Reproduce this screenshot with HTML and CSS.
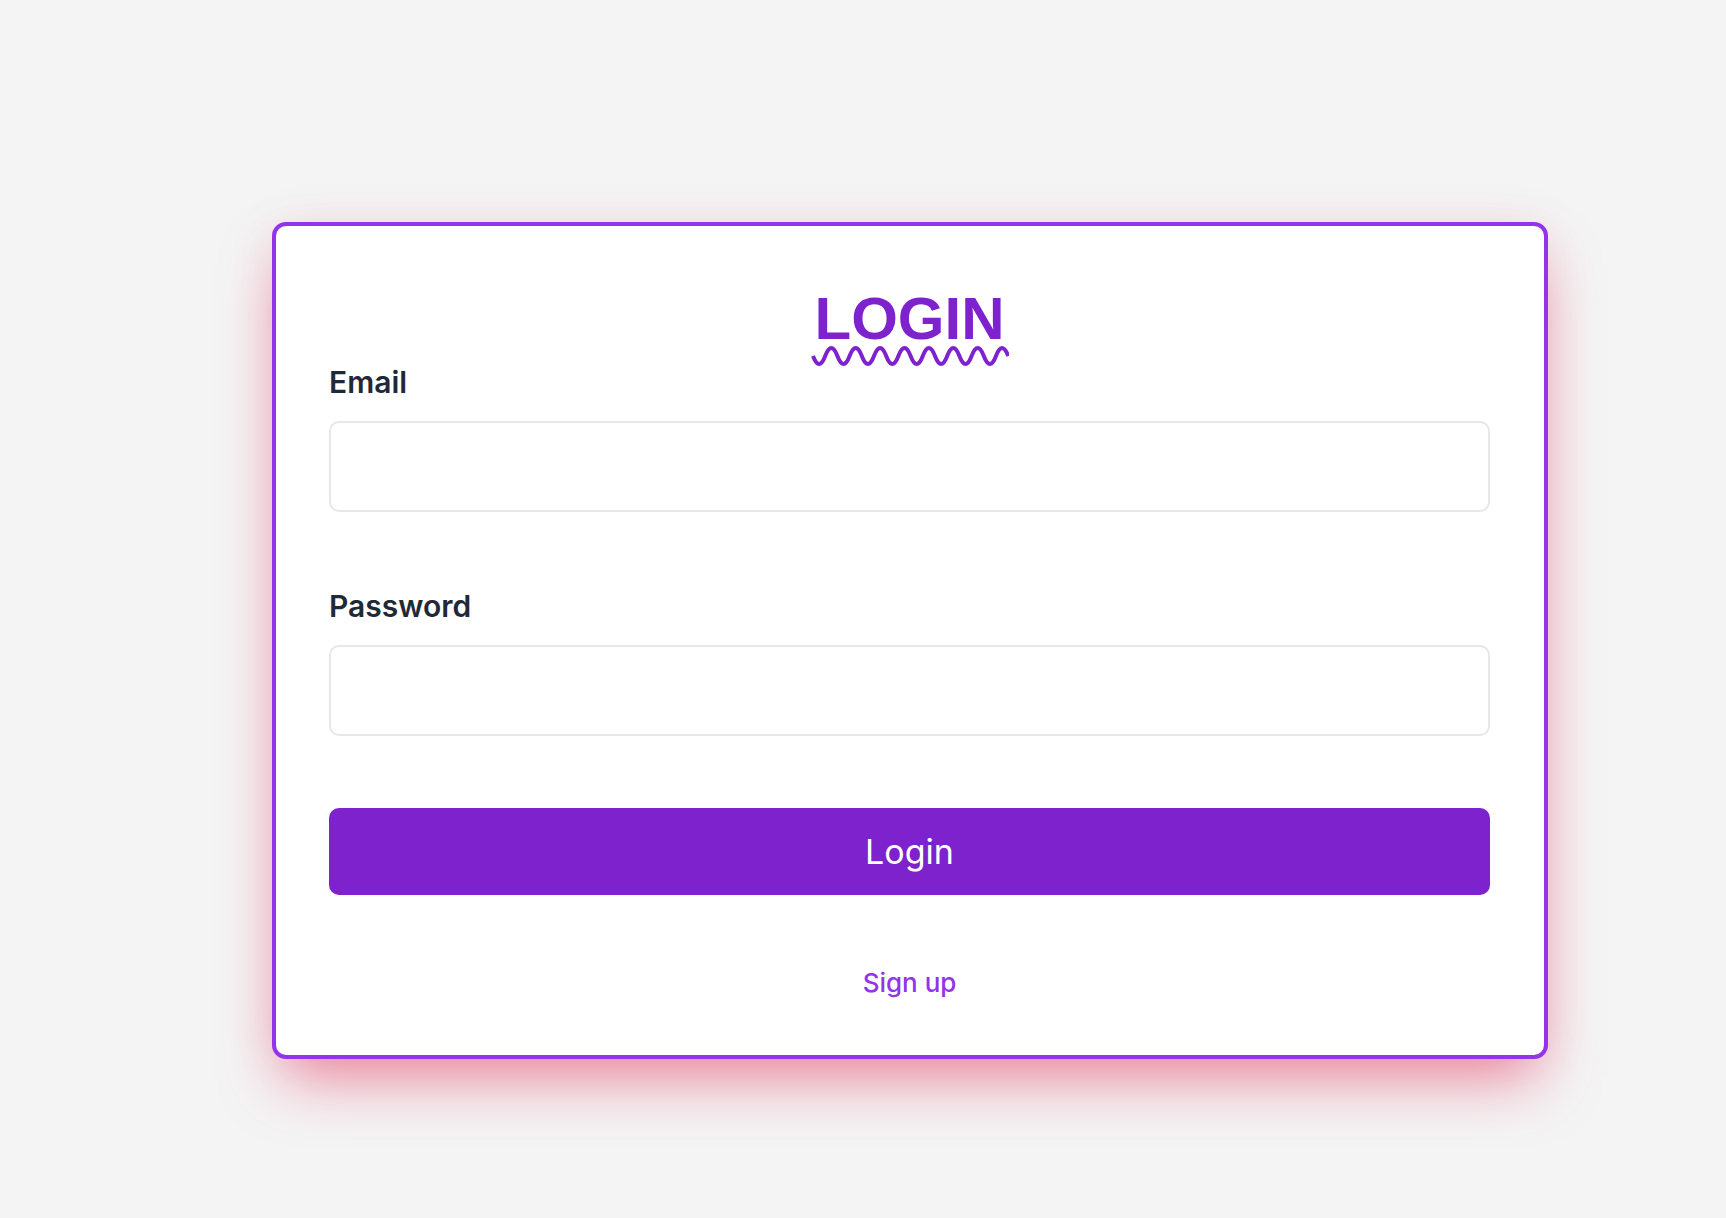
FILE: index.html
```html
<!DOCTYPE html>
<html lang="en">
<head>
    <meta charset="UTF-8">
    <meta name="viewport" content="width=device-width, initial-scale=1.0">
    <title>Login</title>
    <link rel="stylesheet" href="styles.css">
</head>
<body>
    <div class="login-card">
        <h1 class="login-title">
            <span class="title-text">LOGIN</span>
            <svg class="title-wave" width="198" height="20" viewBox="0 0 198 20">
                <path d="M2 6 q6.1 16 12.2 0 t12.2 0 t12.2 0 t12.2 0 t12.2 0 t12.2 0 t12.2 0 t12.2 0 t12.2 0 t12.2 0 t12.2 0 t12.2 0 t12.2 0 t12.2 0 t12.2 0 t12.2 0"
                      transform="translate(0 4)" fill="none" stroke="#7e22ce" stroke-width="4"/>
            </svg>
        </h1>
        <form class="login-form">
            <label class="field-label" for="email">Email</label>
            <input class="field-input" type="email" id="email">

            <label class="field-label field-gap" for="password">Password</label>
            <input class="field-input" type="password" id="password">

            <button class="login-button" type="button">Login</button>
        </form>
        <div class="signup-row">
            <a class="signup-link" href="#">Sign up</a>
        </div>
    </div>
</body>
</html>
```

FILE: styles.css
```css
/* Login page */
html {
    background-color: #f4f4f5;
}
body {
    margin: 0;
    min-height: 100vh;
    padding-top: 222px;
    box-sizing: border-box;
    background-color: #f4f4f5;
    font-family: Inter, "Noto Sans", sans-serif;
}
.login-card {
    box-sizing: border-box;
    width: 1276px;
    margin-left: 272px;
    padding: 63px 54px 53px 53px;
    background: white;
    border: 4px solid #9333ea;
    border-radius: 14px;
    box-shadow: 0 30px 60px -12px rgba(225, 29, 72, 0.5), 0 0 50px rgba(225, 29, 72, 0.07);
}
.login-title {
    margin: 0;
    display: flex;
    flex-direction: column;
    align-items: center;
    font-family: "Liberation Sans", Arial, sans-serif;
    font-size: 60px;
    line-height: 60px;
    font-weight: bold;
    color: #7e22ce;
}
.title-text {
    display: block;
}
.title-wave {
    display: block;
    margin-top: -3px;
    margin-bottom: -4px;
}
.login-form {
    display: flex;
    flex-direction: column;
}
.field-label {
    font-size: 30px;
    line-height: 40px;
    font-weight: 600;
    color: #1f2937;
    margin-bottom: 19px;
}
.field-gap {
    margin-top: 74px;
}
.field-input {
    box-sizing: border-box;
    height: 91px;
    border: 2px solid #e5e7eb;
    border-radius: 10px;
    padding: 0 20px;
    font-size: 24px;
}
.login-button {
    height: 87px;
    margin-top: 72px;
    background-color: #7e22ce;
    color: white;
    border: none;
    border-radius: 10px;
    font-family: Inter, "Noto Sans", sans-serif;
    font-size: 34px;
    cursor: pointer;
}
.signup-row {
    margin-top: 72px;
    text-align: center;
    line-height: 32px;
}
.signup-link {
    font-size: 26px;
    font-weight: 500;
    color: #9333ea;
    text-decoration: none;
}
```
